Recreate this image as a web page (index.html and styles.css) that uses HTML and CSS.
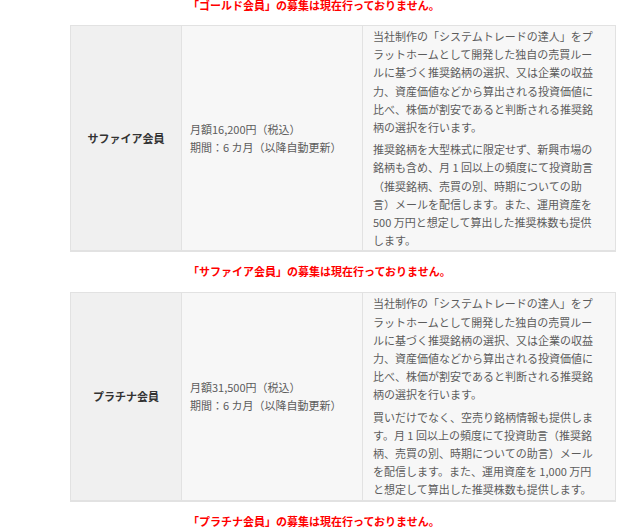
FILE: index.html
```html
<!DOCTYPE html>
<html lang="ja">
<head>
<meta charset="utf-8">
<link rel="stylesheet" href="styles.css">
</head>
<body>
<div class="page">
  <p class="notice notice-first">「ゴールド会員」の募集は現在行っておりません。</p>

  <div class="plan">
    <div class="cell name">サファイア会員</div>
    <div class="cell price">月額16,200円（税込）<br>期間：6 カ月（以降自動更新）</div>
    <div class="cell desc">
      <p>当社制作の「システムトレードの達人」をプ<br>ラットホームとして開発した独自の売買ルー<br>ルに基づく推奨銘柄の選択、又は企業の収益<br>力、資産価値などから算出される投資価値に<br>比べ、株価が割安であると判断される推奨銘<br>柄の選択を行います。</p>
      <p>推奨銘柄を大型株式に限定せず、新興市場の<br>銘柄も含め、月 1 回以上の頻度にて投資助言<br>（推奨銘柄、売買の別、時期についての助<br>言）メールを配信します。また、運用資産を<br>500 万円と想定して算出した推奨株数も提供<br>します。</p>
    </div>
  </div>

  <p class="notice">「サファイア会員」の募集は現在行っておりません。</p>

  <div class="plan">
    <div class="cell name">プラチナ会員</div>
    <div class="cell price">月額31,500円（税込）<br>期間：6 カ月（以降自動更新）</div>
    <div class="cell desc">
      <p>当社制作の「システムトレードの達人」をプ<br>ラットホームとして開発した独自の売買ルー<br>ルに基づく推奨銘柄の選択、又は企業の収益<br>力、資産価値などから算出される投資価値に<br>比べ、株価が割安であると判断される推奨銘<br>柄の選択を行います。</p>
      <p>買いだけでなく、空売り銘柄情報も提供しま<br>す。月 1 回以上の頻度にて投資助言（推奨銘<br>柄、売買の別、時期についての助言）メール<br>を配信します。また、運用資産を 1,000 万円<br>と想定して算出した推奨株数も提供します。</p>
    </div>
  </div>

  <p class="notice">「プラチナ会員」の募集は現在行っておりません。</p>
</div>
</body>
</html>
```

FILE: styles.css
```css
html, body {
  margin: 0;
  padding: 0;
  background: #ffffff;
}

body {
  font-family: "Noto Sans CJK JP", "Noto Sans", sans-serif;
  font-size: 11px;
  color: #5c5c5c;
}

.page {
  margin: -14px 0 0 70px;
  width: 546px;
}

.notice {
  margin: 10px 0 12px 118px;
  color: #ff0000;
  font-weight: bold;
  line-height: 18px;
  white-space: nowrap;
}

.notice-first {
  margin-bottom: 11px;
}

.plan {
  display: grid;
  grid-template-columns: 110px 180px 252px;
  gap: 1px;
  padding: 1px 1px 2px 1px;
  background: #e2e2e2;
}

.cell {
  display: flex;
  flex-direction: column;
  justify-content: center;
  line-height: 18.2px;
  white-space: nowrap;
}

.name {
  background: #f0f0f0;
  align-items: center;
  font-weight: bold;
  color: #333333;
}

.price {
  background: #f7f7f7;
  padding: 0 0 1px 8px;
}

.desc {
  background: #f7f7f7;
  padding: 1px 10px 1px 10px;
  justify-content: flex-start;
}

.desc p {
  margin: 0;
}

.desc p + p {
  margin-top: 4px;
}
```
